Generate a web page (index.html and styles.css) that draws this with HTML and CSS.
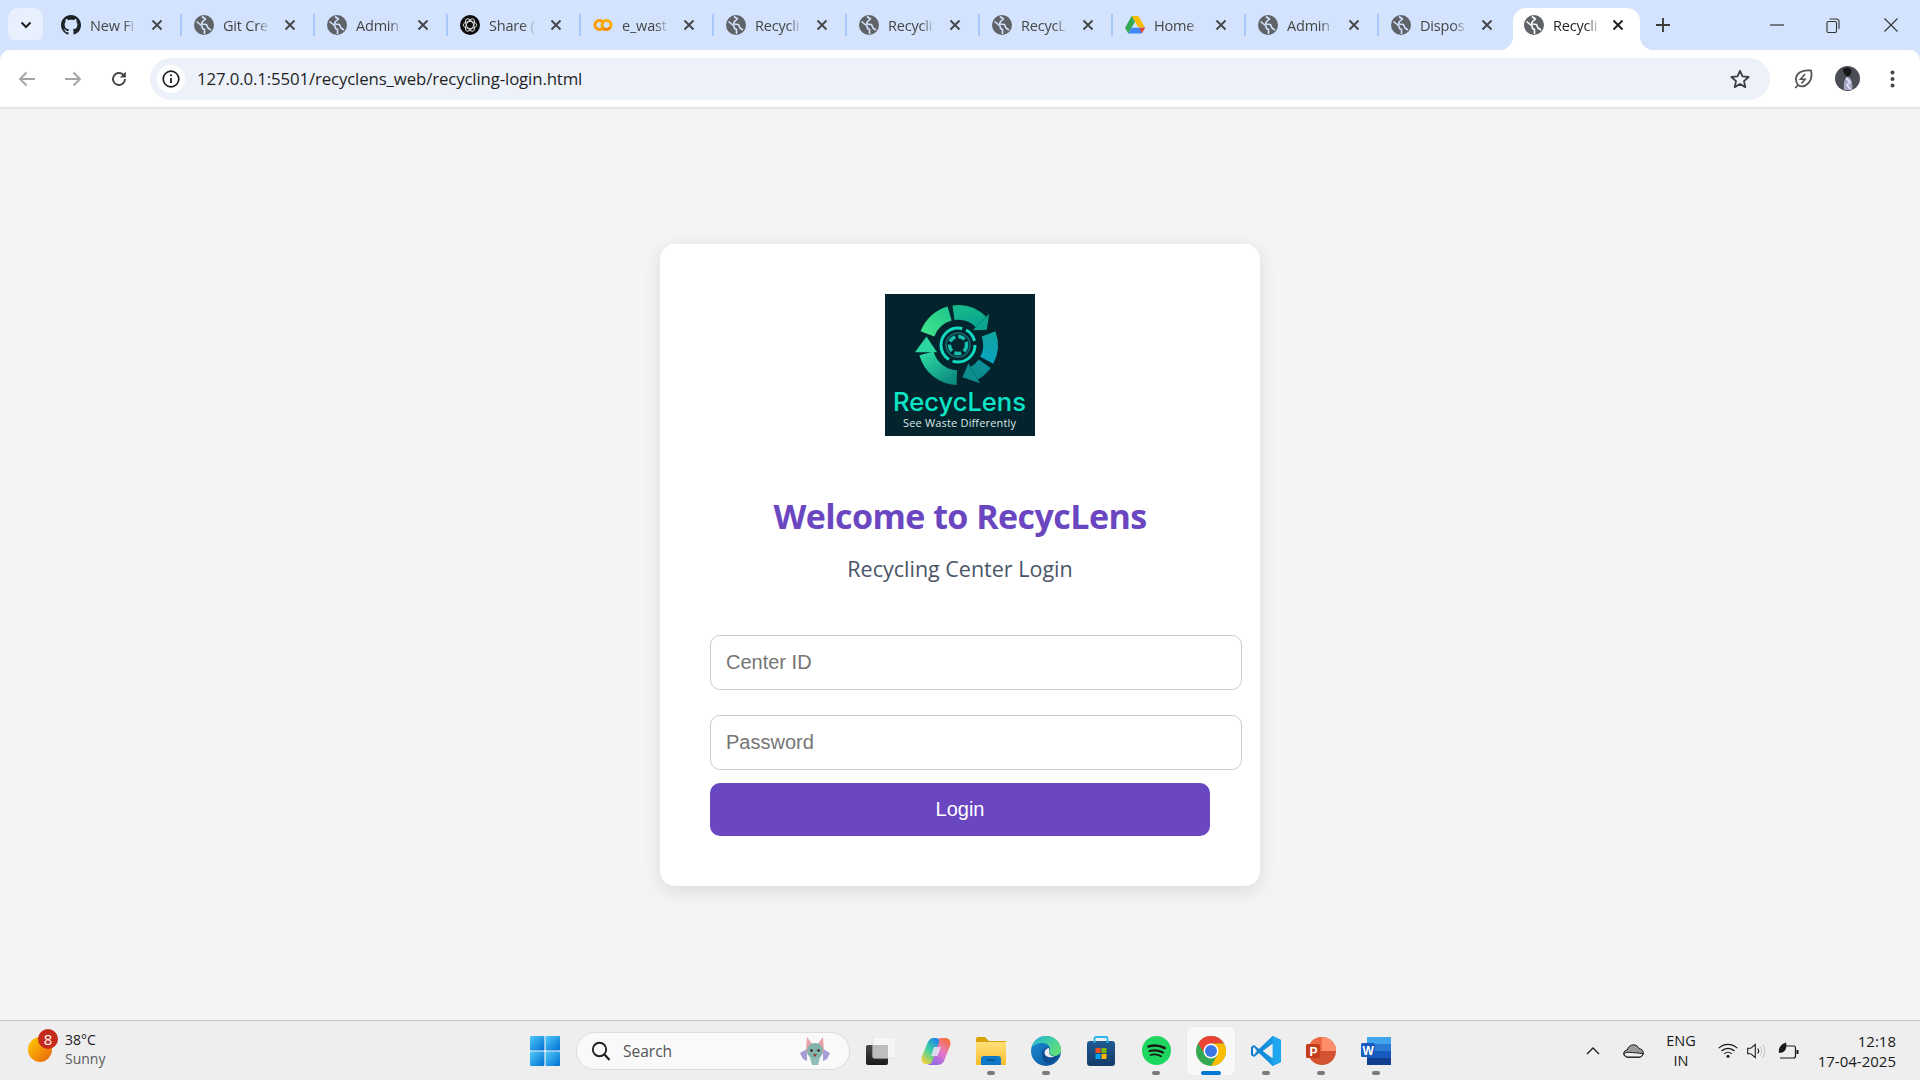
FILE: index.html
```html
<!DOCTYPE html>
<html lang="en">
<head>
<meta charset="utf-8">
<title>Recycling Center Login</title>
<link rel="stylesheet" href="styles.css">
</head>
<body>
<svg class="defs" width="0" height="0" aria-hidden="true">
  <defs>
    <symbol id="globe" viewBox="0 0 20 20"><circle cx="10" cy="10" r="10" fill="#5f6368"/><g fill="none" stroke="currentColor" stroke-width="1.6" stroke-linejoin="round"><path d="M2.500 6.500L8 11l.5 2.500 2 1V19"/><path d="M8 1.500l3.500 2.500L8.500 6.500 7.500 9l5 .5 1.500 3.500 3 2"/></g></symbol>
    <symbol id="close" viewBox="0 0 12 12"><path d="M1.500 1.500l9 9M10.500 1.500l-9 9" stroke="currentColor" stroke-width="1.9" fill="none"/></symbol>
    <linearGradient id="lg1" x1="0" y1="1" x2="1" y2="0"><stop offset="0" stop-color="#3fe28a"/><stop offset="1" stop-color="#22c98c"/></linearGradient>
    <linearGradient id="lg2" x1="0" y1="0" x2="1" y2="1"><stop offset="0" stop-color="#14b88a"/><stop offset="1" stop-color="#0ca58f"/></linearGradient>
    <linearGradient id="lg3" x1="0" y1="0" x2="0" y2="1"><stop offset="0" stop-color="#0fa3a0"/><stop offset="1" stop-color="#0aa4c0"/></linearGradient>
    <linearGradient id="lg4" x1="1" y1="0" x2="0" y2="1"><stop offset="0" stop-color="#0b8f97"/><stop offset="1" stop-color="#0c8c8c"/></linearGradient>
    <linearGradient id="lg5" x1="1" y1="1" x2="0" y2="0"><stop offset="0" stop-color="#0c8a80"/><stop offset="1" stop-color="#2bd6a0"/></linearGradient>
    <linearGradient id="sun" x1="0" y1="0" x2="1" y2="1"><stop offset="0" stop-color="#ffd000"/><stop offset="1" stop-color="#e85f10"/></linearGradient>
    <linearGradient id="win" x1="0" y1="0" x2="1" y2="1"><stop offset="0" stop-color="#4fc9fb"/><stop offset="1" stop-color="#0070d0"/></linearGradient>
    <linearGradient id="edgeB" x1="0" y1="0" x2="1" y2="1"><stop offset="0" stop-color="#1a8fd8"/><stop offset="1" stop-color="#0c4f96"/></linearGradient>
    <linearGradient id="edgeG" x1="0" y1="0" x2="1" y2="0.6"><stop offset="0" stop-color="#1fb6d6"/><stop offset="1" stop-color="#5fe07a"/></linearGradient>
    <linearGradient id="folder" x1="0" y1="0" x2="0" y2="1"><stop offset="0" stop-color="#ffe07a"/><stop offset="1" stop-color="#fbbd2a"/></linearGradient>
    <linearGradient id="cop1" x1="0.8" y1="0" x2="0.2" y2="1"><stop offset="0" stop-color="#1d84ec"/><stop offset="0.5" stop-color="#3ed0a0"/><stop offset="1" stop-color="#f5d23a"/></linearGradient>
    <linearGradient id="cop2" x1="0.8" y1="0" x2="0.2" y2="1"><stop offset="0" stop-color="#8a62ee"/><stop offset="0.55" stop-color="#e87ac8"/><stop offset="1" stop-color="#f6703a"/></linearGradient>
    <linearGradient id="vs" x1="0" y1="0" x2="1" y2="0"><stop offset="0" stop-color="#0a78c8"/><stop offset="1" stop-color="#1fa6ee"/></linearGradient>
    <linearGradient id="store" x1="0" y1="0" x2="0" y2="1"><stop offset="0" stop-color="#1f5a94"/><stop offset="1" stop-color="#143a68"/></linearGradient>
    <linearGradient id="tv" x1="0" y1="0" x2="0" y2="1"><stop offset="0" stop-color="#484848"/><stop offset="1" stop-color="#1a1a1a"/></linearGradient>
  </defs>
</svg>

<div class="browser">
  <header class="tabstrip">
    <button class="tab-menu" type="button"><svg width="12" height="8" viewBox="0 0 12 8"><path d="M1.500 1.500L6 6l4.500-4.500" fill="none" stroke="#1f1f1f" stroke-width="2"/></svg></button>
    <div class="tabs">
      <div class="tab"><svg class="fav" viewBox="0 0 16 16"><path fill="#1f2328" d="M8 0C3.58 0 0 3.58 0 8c0 3.54 2.29 6.53 5.47 7.59.4.07.55-.17.55-.38 0-.19-.01-.82-.01-1.49-2.01.37-2.53-.49-2.69-.94-.09-.23-.48-.94-.82-1.13-.28-.15-.68-.52-.01-.53.63-.01 1.08.58 1.23.82.72 1.21 1.87.87 2.33.66.07-.52.28-.87.51-1.07-1.78-.2-3.64-.89-3.64-3.95 0-.87.31-1.59.82-2.15-.08-.2-.36-1.02.08-2.12 0 0 .67-.21 2.2.82.64-.18 1.32-.27 2-.27s1.36.09 2 .27c1.53-1.04 2.2-.82 2.2-.82.44 1.1.16 1.92.08 2.12.51.56.82 1.27.82 2.15 0 3.07-1.87 3.75-3.65 3.95.29.25.54.73.54 1.48 0 1.07-.01 1.93-.01 2.2 0 .21.15.46.55.38A8.013 8.013 0 0016 8c0-4.42-3.58-8-8-8z"/></svg><span class="tab-title">New Fi</span><svg class="x"><use href="#close"/></svg><i class="sep"></i></div>
      <div class="tab"><svg class="fav"><use href="#globe"/></svg><span class="tab-title">Git Cre</span><svg class="x"><use href="#close"/></svg><i class="sep"></i></div>
      <div class="tab"><svg class="fav"><use href="#globe"/></svg><span class="tab-title">Admin</span><svg class="x"><use href="#close"/></svg><i class="sep"></i></div>
      <div class="tab"><svg class="fav" viewBox="0 0 20 20"><circle cx="10" cy="10" r="10" fill="#0b0b0b"/><g fill="none" stroke="#d8d8d8" stroke-width="1"><ellipse cx="10" cy="10" rx="6.800" ry="3.500"/><ellipse cx="10" cy="10" rx="6.800" ry="3.500" transform="rotate(60 10 10)"/><ellipse cx="10" cy="10" rx="6.800" ry="3.500" transform="rotate(120 10 10)"/></g></svg><span class="tab-title">Share (</span><svg class="x"><use href="#close"/></svg><i class="sep"></i></div>
      <div class="tab"><svg class="fav" viewBox="0 0 20 20"><g fill="none" stroke-width="3"><path d="M9.300 6.500a4.500 4.500 0 1 0 0 7" stroke="#fb9c00"/><circle cx="13.500" cy="10" r="4.500" stroke="#f9ab00"/><path d="M17 12.500a4.500 4.500 0 0 1-7 .5" stroke="#f08a00"/></g></svg><span class="tab-title">e_wast</span><svg class="x"><use href="#close"/></svg><i class="sep"></i></div>
      <div class="tab"><svg class="fav"><use href="#globe"/></svg><span class="tab-title">Recycli</span><svg class="x"><use href="#close"/></svg><i class="sep"></i></div>
      <div class="tab"><svg class="fav"><use href="#globe"/></svg><span class="tab-title">Recycli</span><svg class="x"><use href="#close"/></svg><i class="sep"></i></div>
      <div class="tab"><svg class="fav"><use href="#globe"/></svg><span class="tab-title">RecycL</span><svg class="x"><use href="#close"/></svg><i class="sep"></i></div>
      <div class="tab"><svg class="fav" viewBox="0 0 20 18"><path d="M6.700 0h6.600l6.700 11.600h-6.600z" fill="#fbbc04"/><path d="M6.700 0L0 11.700l3.300 5.800 6.700-11.700z" fill="#34a853"/><path d="M6.600 11.700h13.400l-3.300 5.800H3.300z" fill="#4285f4"/><path d="M16.700 17.500l3.300-5.800h-5.500z" fill="#ea4335"/></svg><span class="tab-title">Home</span><svg class="x"><use href="#close"/></svg><i class="sep"></i></div>
      <div class="tab"><svg class="fav"><use href="#globe"/></svg><span class="tab-title">Admin</span><svg class="x"><use href="#close"/></svg><i class="sep"></i></div>
      <div class="tab"><svg class="fav"><use href="#globe"/></svg><span class="tab-title">Dispos</span><svg class="x"><use href="#close"/></svg></div>
      <div class="tab tab-active"><svg class="fav"><use href="#globe"/></svg><span class="tab-title">Recycli</span><svg class="x"><use href="#close"/></svg></div>
    </div>
    <button class="new-tab" type="button"><svg width="14" height="14" viewBox="0 0 14 14"><path d="M7 0v14M0 7h14" stroke="#3c3c3c" stroke-width="1.900"/></svg></button>
    <div class="win-controls">
      <span class="win-btn"><svg width="14" height="2" viewBox="0 0 14 2"><path d="M0 1h14" stroke="#333" stroke-width="1.200"/></svg></span>
      <span class="win-btn"><svg width="14" height="15" viewBox="0 0 14 15"><rect x="1" y="3.500" width="9.500" height="11" rx="1.500" fill="none" stroke="#333" stroke-width="1.100"/><path d="M3.500 1h7a2.500 2.500 0 0 1 2.500 2.500V11" fill="none" stroke="#333" stroke-width="1.100"/></svg></span>
      <span class="win-btn win-close"><svg width="14" height="14" viewBox="0 0 14 14"><path d="M.5.5l13 13M13.500.5l-13 13" stroke="#333" stroke-width="1.100"/></svg></span>
    </div>
  </header>

  <nav class="toolbar">
    <span class="tool-btn"><svg width="18" height="16" viewBox="0 0 18 16"><path d="M17 8H2M8.500 1.500L2 8l6.500 6.500" fill="none" stroke="#a3a5a8" stroke-width="1.900"/></svg></span>
    <span class="tool-btn"><svg width="18" height="16" viewBox="0 0 18 16"><path d="M1 8h15M9.500 1.500L16 8l-6.500 6.500" fill="none" stroke="#a3a5a8" stroke-width="1.900"/></svg></span>
    <span class="tool-btn tool-btn-reload"><svg width="18" height="18" viewBox="0 0 18 18"><path d="M15 9a6 6 0 1 1-1.800-4.300L15 6.500" fill="none" stroke="#444746" stroke-width="1.900"/><path d="M15.800 1.500v6h-6z" fill="#444746"/></svg></span>
    <div class="omnibox">
      <span class="site-info"><svg width="18" height="18" viewBox="0 0 18 18"><circle cx="9" cy="9" r="7.800" fill="none" stroke="#1f1f1f" stroke-width="1.700"/><path d="M9 8v5" stroke="#1f1f1f" stroke-width="1.800"/><circle cx="9" cy="5.300" r="1.100" fill="#1f1f1f"/></svg></span>
      <span class="url">127.0.0.1:5501/recyclens_web/recycling-login.html</span>
      <span class="star"><svg width="20" height="20" viewBox="0 0 20 20"><path d="M10 1.800l2.500 5.600 6.100.6-4.600 4.100 1.300 6L10 15l-5.300 3.100 1.300-6L1.400 8l6.100-.6z" fill="none" stroke="#3c3f42" stroke-width="1.800" stroke-linejoin="round"/></svg></span>
    </div>
    <div class="tool-right">
      <span class="tool-btn"><svg width="20" height="22" viewBox="0 0 20 22"><path d="M5 17C1.500 12.500 2.500 7 7 4.300 10 2.500 14 2 18 2.500c1 4.500.5 9.500-3 13C12 18.500 8 19 5 17zM5 17l-2.800 3" fill="none" stroke="#555" stroke-width="1.800" stroke-linejoin="round"/><path d="M12 6l-4.500 5.300h4.500L8.500 15.500" fill="none" stroke="#555" stroke-width="1.600"/></svg></span>
      <span class="tool-btn"><svg width="25" height="25" viewBox="0 0 25 25"><circle cx="12.500" cy="12.500" r="12.500" fill="#4c4e55"/><path d="M8 3c3-2.500 7-2 8.500 1 .5 2-.5 5-3 6-3 .5-5.500-3-5.500-7z" fill="#17181c"/><path d="M9 24c-.5-6 0-11 3-13 3 0 5.500 2 5.500 13z" fill="#a5a8c6"/><path d="M11 12l4 4-3 3 3 4" stroke="#e6e8f8" stroke-width="1.500" fill="none"/></svg></span>
      <span class="tool-btn"><svg width="5" height="18" viewBox="0 0 5 18"><circle cx="2.500" cy="2.500" r="2" fill="#444746"/><circle cx="2.500" cy="9" r="2" fill="#444746"/><circle cx="2.500" cy="15.500" r="2" fill="#444746"/></svg></span>
    </div>
  </nav>

  <main class="page">
    <section class="card">
      <div class="logo-wrap">
        <svg class="logo" width="150" height="142" viewBox="0 0 150 142" role="img" aria-label="RecycLens logo">
          <rect width="150" height="142" fill="#03242c"/>
          <g transform="translate(73 51) scale(1.05) translate(-73 -51)">
            <g fill="none" stroke-width="14">
              <path d="M43.900 40.400A32 32 0 0 1 65 21" stroke="url(#lg1)"/>
              <path d="M68.700 20.300A31 31 0 0 1 94.900 29.100" stroke="url(#lg2)"/>
              <path d="M102.100 40.400A31 31 0 0 1 100.400 65.500" stroke="url(#lg3)"/>
              <path d="M98.400 68.800A31 31 0 0 1 88.500 77.800" stroke="url(#lg4)"/>
              <path d="M71.900 82A31 31 0 0 1 43 59" stroke="url(#lg5)"/>
            </g>
            <polygon points="87.100,36.900 102.700,21.300 100.400,36.500" fill="#0ca58f"/>
            <polygon points="83,68.300 94,87.400 77.300,81.700" fill="#0c8c8c"/>
            <polygon points="43,43 32,58 53,58" fill="#2bd6a0"/>
          </g>
          <circle cx="73" cy="51" r="17" fill="none" stroke="#14d8c0" stroke-width="3" stroke-dasharray="32 4 48 4 14 4"/>
          <circle cx="73" cy="51" r="12" fill="#03242c" stroke="#0f5f66" stroke-width="2"/>
          <circle cx="73" cy="51" r="8.500" fill="none" stroke="#17bfae" stroke-width="3.500" stroke-dasharray="7 3"/>
          <text class="logo-name" x="8" y="116.500" textLength="133" lengthAdjust="spacingAndGlyphs">RecycLens</text>
          <text class="logo-tag" x="18" y="133" textLength="113" lengthAdjust="spacing">See Waste Differently</text>
        </svg>
      </div>
      <h1 class="title">Welcome to RecycLens</h1>
      <p class="subtitle">Recycling Center Login</p>
      <form class="login-form">
        <input class="field" type="text" placeholder="Center ID">
        <input class="field" type="password" placeholder="Password">
        <button class="login-btn" type="button">Login</button>
      </form>
    </section>
  </main>

  <footer class="taskbar">
    <div class="tb-left">
      <span class="weather-icon">
        <svg width="24" height="25" viewBox="0 0 24 25"><ellipse cx="12" cy="12.500" rx="12" ry="12.500" fill="url(#sun)"/></svg>
        <b class="weather-badge">8</b>
      </span>
      <span class="weather-text"><span class="temp">38°C</span><span class="cond">Sunny</span></span>
    </div>
    <div class="tb-center">
      <span class="start"><svg width="30" height="30" viewBox="0 0 30 30"><g fill="url(#win)"><rect width="14.400" height="14.400" rx="1"/><rect x="15.600" width="14.400" height="14.400" rx="1"/><rect y="15.600" width="14.400" height="14.400" rx="1"/><rect x="15.600" y="15.600" width="14.400" height="14.400" rx="1"/></g></svg></span>
      <div class="search">
        <svg width="20" height="20" viewBox="0 0 20 20"><circle cx="8.500" cy="8.500" r="6.700" fill="none" stroke="#222" stroke-width="1.900"/><path d="M13.500 13.500l5 5.500" stroke="#222" stroke-width="2.200"/></svg>
        <span class="search-text">Search</span>
        <svg class="bat" width="34" height="30" viewBox="0 0 34 30"><path d="M2 17l7-4v12l-4-2zM32 17l-7-4v12l4-2z" fill="#a79bd8"/><path d="M9 1l6 8h4l6-8 1 14-9 12-9-12z" fill="#e6a0a8"/><ellipse cx="17" cy="15" rx="8" ry="8" fill="#7fb3ac"/><path d="M12 22h10l-2 7h-6z" fill="#8fbdb6"/><circle cx="13.500" cy="14.500" r="1.300" fill="#3a1a1a"/><circle cx="20.500" cy="14.500" r="1.300" fill="#3a1a1a"/><path d="M15 18h4l-2 3z" fill="#9a3030"/></svg>
      </div>
      <span class="app"><span class="tile"><svg width="30" height="28" viewBox="0 0 30 28"><rect y="8" width="22" height="20" rx="2" fill="url(#tv)"/><rect x="7" width="23" height="21" rx="1" fill="#f8f8f8" fill-opacity=".75" stroke="#e4e4e4"/><rect x="7" y="8" width="15" height="13" fill="#bdbdbd"/></svg></span></span>
      <span class="app"><span class="tile"><svg width="30" height="28" viewBox="0 0 30 28"><path d="M14 0h7c2 0 2.500 1.500 2 3l-7 19c-1 3-3.500 5-6.500 5H5.500C1.500 27 -.5 23 1 19L7 4c1-2.500 4-4 7-4z" fill="url(#cop2)" transform="rotate(180 15 14)"/><path d="M13 1c-3 0-5 1.500-6 4L1 19c-1.500 4 .5 8 4.500 8H8c2 0 3-1 3.500-3L18 5c.5-2-1-4-2.500-4z" fill="url(#cop1)"/><path d="M13 10h7l-3.500 9h-6.500z" fill="#e9e4f6" fill-opacity=".85"/></svg></span></span>
      <span class="app has-dot"><span class="tile"><svg width="30" height="28" viewBox="0 0 30 28"><path d="M0 2a2 2 0 0 1 2-2h7l4 4h17v4H0z" fill="#dba30a"/><path d="M0 5h30v23H0z" fill="url(#folder)"/><path d="M5 22a3 3 0 0 1 3-3h14a3 3 0 0 1 3 3v6H5z" fill="#0f78c8"/><path d="M11 23h8" stroke="#0b4f88" stroke-width="1.500"/></svg></span></span>
      <span class="app has-dot"><span class="tile"><svg width="30" height="30" viewBox="0 0 30 30"><circle cx="15" cy="15" r="15" fill="url(#edgeB)"/><path d="M1 11C3 4 9 0 15 0c8 0 15 6 15 14 0 4-3 6-7 6-3 0-5-1-5-3 0-1 1-2 1-4 0-3-3-6-8-6S3 10 1 11z" fill="url(#edgeG)"/><path d="M11 19c0-5 3-8 7-7.500 .5 1.500.5 3.500 0 5 .5 2 3 3.500 6 3.500 1.500 0 3-.5 4-1.500-2 5-7 9-12 9-3-1.500-5-5-5-8.500z" fill="#0f4c93"/><path d="M13.500 17c0-3 2-4.500 4.500-5 .5 1.500.5 3.500 0 5 .5 2 3 3.500 6 3.500-4 1.500-10 1-10.500-3.500z" fill="#eeeeee"/></svg></span></span>
      <span class="app"><span class="tile"><svg width="28" height="30" viewBox="0 0 28 30"><rect y="5" width="28" height="25" rx="3" fill="url(#store)"/><path d="M7.500 7V2.500a1.500 1.500 0 0 1 1.500-1.500h10a1.500 1.500 0 0 1 1.500 1.500V7" fill="none" stroke="#29b6ea" stroke-width="1.800"/><rect x="8.500" y="12" width="5" height="5" fill="#f25022"/><rect x="14.500" y="12" width="5" height="5" fill="#7fba00"/><rect x="8.500" y="18" width="5" height="5" fill="#00a4ef"/><rect x="14.500" y="18" width="5" height="5" fill="#ffb900"/></svg></span></span>
      <span class="app has-dot"><span class="tile"><svg width="29" height="29" viewBox="0 0 29 29"><circle cx="14.500" cy="14.500" r="14.500" fill="#1ed760"/><g fill="none" stroke="#1a1a1a" stroke-linecap="round"><path d="M6.500 10.500c5-1.500 11.500-1 16 1.500" stroke-width="2.600"/><path d="M7.500 15c4.500-1.200 9.500-.7 13.500 1.500" stroke-width="2.200"/><path d="M8.500 19c3.500-1 7.500-.6 10.500 1.200" stroke-width="1.800"/></g></svg></span></span>
      <span class="app"><span class="tile tile-active"><svg width="30" height="30" viewBox="0 0 30 30"><circle cx="15" cy="15" r="15" fill="#34a853"/><path d="M2 7.500A15 15 0 0 1 28 7.500L15 7.500 9 18z" fill="#ea4335"/><path d="M28 7.500A15 15 0 0 1 15 30L21 19.500 15 7.500z" fill="#fbbc04"/><circle cx="15" cy="15" r="7.500" fill="#fff"/><circle cx="15" cy="15" r="6" fill="#3b78e7"/></svg></span></span>
      <span class="app has-dot"><span class="tile"><svg width="30" height="30" viewBox="0 0 30 30"><path d="M21.500 0L30 4v22l-8.500 4L8 17l-5 4-3-2v-8l3-2 5 4z" fill="url(#vs)"/><path d="M21.500 8L12 15l9.500 7z" fill="#eeeeee"/><path d="M21.500 0L30 4v22l-8.500 4z" fill="#1fa6ee"/><path d="M21.500 8L12 15l9.500 7z" fill="#eeeeee"/><path d="M3 11l-1 1v6l1 1 3-4z" fill="#eeeeee"/></svg></span></span>
      <span class="app has-dot"><span class="tile"><svg width="30" height="30" viewBox="0 0 30 30"><circle cx="16" cy="15" r="14" fill="#d35230"/><path d="M16 1a14 14 0 0 1 14 14H16z" fill="#ff8f6b"/><path d="M16 1a14 14 0 0 0-14 14h14z" fill="#ed6c47"/><rect x="0" y="8" width="14" height="14" rx="1.500" fill="#c43e1c"/><text class="tile-letter" x="3.500" y="19.500">P</text></svg></span></span>
      <span class="app has-dot"><span class="tile"><svg width="30" height="30" viewBox="0 0 30 30"><rect x="6" y="1" width="24" height="7" fill="#41a5ee"/><rect x="6" y="8" width="24" height="7" fill="#2b7cd3"/><rect x="6" y="15" width="24" height="7" fill="#185abd"/><rect x="6" y="22" width="24" height="7" fill="#103f91"/><rect x="0" y="7" width="14" height="14" rx="1.500" fill="#1a5bbf"/><text class="tile-letter" x="1.600" y="18.500">W</text></svg></span></span>
    </div>
    <div class="tray">
      <span class="tray-item tray-chev"><svg width="14" height="8" viewBox="0 0 14 8"><path d="M1 7l6-6 6 6" fill="none" stroke="#1a1a1a" stroke-width="1.300"/></svg></span>
      <span class="tray-item tray-cloud"><svg width="21" height="14" viewBox="0 0 21 14"><path d="M5 13.300C2.500 13.300.7 11.700.7 9.600c0-2 1.600-3.500 3.500-3.600C5 3 7.500.8 10.500.8c2.600 0 4.700 1.600 5.500 3.800 2.600.2 4.300 2 4.300 4.400 0 2.500-1.900 4.300-4.300 4.300z" fill="#9a9a9a" stroke="#1a1a1a" stroke-width="1"/><path d="M1 9.500c3-2 7-1 19 0 0 2-2 3.500-4 3.500H5c-2 0-4-1.500-4-3.500z" fill="#eeeeee" stroke="#1a1a1a" stroke-width="1"/></svg></span>
      <span class="tray-item tray-lang"><span>ENG</span><span>IN</span></span>
      <span class="tray-item tray-wifi"><svg width="20" height="15" viewBox="0 0 20 15"><g fill="none" stroke="#1a1a1a" stroke-width="1.200"><path d="M.8 5.200a13 13 0 0 1 18.400 0"/><path d="M3.500 8a9.200 9.200 0 0 1 13 0"/><path d="M6.300 10.800a5.200 5.200 0 0 1 7.400 0"/></g><circle cx="10" cy="13.200" r="1.500" fill="#1a1a1a"/></svg></span>
      <span class="tray-item tray-vol"><svg width="20" height="16" viewBox="0 0 20 16"><path d="M.7 5.300h3L8.300 1.500v13L3.700 10.700h-3z" fill="none" stroke="#1a1a1a" stroke-width="1.100"/><path d="M10.700 5.500a4 4 0 0 1 0 5" fill="none" stroke="#1a1a1a" stroke-width="1.100"/><path d="M13 3.500a7 7 0 0 1 0 9M15.500 1.500a10 10 0 0 1 0 13" fill="none" stroke="#c4c4c4" stroke-width="1.100"/></svg></span>
      <span class="tray-item tray-bat"><svg width="21" height="18" viewBox="0 0 21 18"><path d="M5 4h10.500a2 2 0 0 1 2 2v8a2 2 0 0 1-2 2H2" fill="none" stroke="#1a1a1a" stroke-width="1.200"/><rect x="18.500" y="8" width="2" height="4" fill="#1a1a1a"/><path d="M1 11C0 6 3 2 8 .5c1 4 0 9-4 10-1 .3-2 .5-3 .5z" fill="#1a1a1a"/></svg></span>
      <span class="clock"><span>12:18</span><span>17-04-2025</span></span>
    </div>
  </footer>
</div>
</body>
</html>
```

FILE: styles.css
```css
* { box-sizing: border-box; }
html, body { margin: 0; height: 100%; overflow: hidden; }
body { font-family: "Open Sans", "Noto Sans", sans-serif; color: #1f1f1f; }
.defs { position: absolute; }
button { border: 0; padding: 0; font: inherit; }

.browser { display: flex; flex-direction: column; height: 100vh; background: #f3f4f6; }

/* tab strip */
.tabstrip { display: flex; align-items: flex-end; height: 50px; flex: none; background: #d3e3fd; }
.tab-menu { display: flex; align-items: center; justify-content: center; width: 35px; height: 34px; margin: 0 5px 8px 8px; background: #e9f0fd; border-radius: 10px; }
.tabs { display: flex; align-items: stretch; height: 42px; }
.tab { display: flex; align-items: center; width: 133px; padding: 0 0 8px 13px; position: relative; color: #444746; }
.fav { width: 20px; height: 20px; flex: none; color: #d3e3fd; }
.tab-title { width: 47px; margin-left: 9px; font-size: 14.5px; letter-spacing: -.2px; white-space: nowrap; overflow: hidden; -webkit-mask-image: linear-gradient(to right, #000 72%, transparent 100%); mask-image: linear-gradient(to right, #000 72%, transparent 100%); }
.x { width: 12px; height: 12px; margin-left: 14px; color: #444746; flex: none; }
.sep { position: absolute; left: 132px; top: 6px; width: 2px; height: 22px; background: #a8c7fa; }
.tab-active { background: #fff; border-radius: 13px 13px 0 0; color: #1f1f1f; width: 127px; padding: 0 0 8px 11px; margin-left: 2px; }
.tab-active .fav { color: #fff; }
.tab-active .x { color: #1f1f1f; margin-left: 12px; }
.tab-active::before, .tab-active::after { content: ""; position: absolute; bottom: 0; width: 14px; height: 14px; }
.tab-active::before { left: -14px; background: radial-gradient(circle at 0 0, transparent 14px, #fff 14.5px); }
.tab-active::after { right: -14px; background: radial-gradient(circle at 100% 0, transparent 14px, #fff 14.5px); }
.new-tab { display: flex; align-items: center; justify-content: center; align-self: flex-start; width: 30px; height: 30px; margin: 10px 0 0 8px; background: transparent; }
.win-controls { display: flex; margin-left: auto; align-self: flex-start; height: 50px; }
.win-btn { display: flex; align-items: center; justify-content: center; width: 56px; height: 50px; }
.win-close { width: 59px; }

/* toolbar */
.toolbar { display: flex; align-items: center; height: 59px; flex: none; padding: 0 5px 0 4px; background: #fff; border-bottom: 2px solid #e4e5e7; border-radius: 10px 10px 0 0; box-shadow: 0 -10px 0 #d3e3fd; }
.tool-btn { display: flex; align-items: center; justify-content: center; width: 46px; height: 40px; flex: none; }
.tool-btn-reload { width: 45px; margin-right: 9px; }
.omnibox { display: flex; align-items: center; width: 1620px; height: 42px; flex: none; padding: 0 10px 0 7px; background: #edf2fa; border-radius: 21px; }
.site-info { display: flex; align-items: center; justify-content: center; width: 28px; height: 28px; flex: none; background: #fff; border-radius: 50%; }
.url { margin-left: 12px; font-size: 16.8px; color: #1f1f1f; letter-spacing: -.12px; white-space: nowrap; }
.star { display: flex; margin-left: auto; margin-right: 10px; }
.tool-right { display: flex; margin-left: 10px; }
.tool-right .tool-btn { width: 45px; }

/* login card */
.page { flex: 1; display: flex; align-items: center; justify-content: center; min-height: 0; }
.card { width: 600px; padding: 50px; background: #fff; border-radius: 15px; box-shadow: 0 5px 19px rgba(0, 0, 0, .1); }
.logo-wrap { display: flex; justify-content: center; }
.logo { display: block; }
.logo-name { font-family: Inter, sans-serif; font-size: 25px; font-weight: 500; fill: #0ce4c8; }
.logo-tag { font-family: "Open Sans", sans-serif; font-size: 11px; font-weight: 500; fill: #dce8e8; }
.title { margin: 56px 0 0; font-size: 34px; line-height: 48px; font-weight: 700; text-align: center; color: #6b46c1; letter-spacing: -.55px; }
.subtitle { margin: 14.5px 0 0; font-size: 21.5px; line-height: 30px; text-align: center; color: #4a5568; }
.login-form { display: flex; flex-direction: column; align-items: flex-start; margin-top: 50.5px; }
.field { display: block; width: 532px; height: 55px; padding: 0 15px; border: 1px solid #ccc; border-radius: 10px; background: #fff; font-family: "Liberation Sans", Arial, sans-serif; font-size: 20px; outline: 0; }
.field::placeholder { color: #757575; opacity: 1; }
.field + .field { margin-top: 25px; }
.login-btn { width: 100%; height: 53px; margin-top: 13px; background: #6b46c1; color: #fff; border-radius: 10px; font-family: "Liberation Sans", Arial, sans-serif; font-size: 20px; }

/* taskbar */
.taskbar { display: flex; align-items: center; height: 60px; flex: none; background: #eeeeee; border-top: 1px solid #c6c6c6; }
.tb-left { display: flex; align-items: center; width: 530px; padding: 0 0 3px 28px; }
.weather-icon { display: block; position: relative; width: 24px; height: 25px; }
.weather-icon svg { display: block; }
.weather-badge { position: absolute; left: 10px; top: -8px; width: 20px; height: 20px; border-radius: 50%; background: #c42b1c; color: #fff; font-size: 15px; font-weight: 400; line-height: 20px; text-align: center; }
.weather-text { display: flex; flex-direction: column; margin-left: 13px; font-size: 14px; line-height: 19.5px; }
.temp { color: #1a1a1a; }
.cond { color: #5d5d5d; }
.tb-center { display: flex; align-items: center; }
.start { display: flex; width: 30px; margin-right: 16px; }
.search { display: flex; align-items: center; width: 274px; height: 38px; margin-right: 3.5px; padding: 0 17.5px 0 14px; background: #f9f9f9; border: 1px solid #dcdcdc; border-radius: 19px; }
.search-text { margin-left: 12px; font-size: 15.5px; color: #555; }
.bat { margin-left: auto; }
.app { display: flex; justify-content: center; width: 55px; }
.tile { position: relative; display: flex; align-items: center; justify-content: center; width: 48px; height: 48px; border-radius: 5px; }
.tile-active { background: #f8f8f8; box-shadow: 0 0 1px rgba(0, 0, 0, .15); }
.tile-active::after { content: ""; position: absolute; left: 14px; bottom: 0; width: 20px; height: 4px; border-radius: 2px; background: #0078d4; }
.has-dot .tile::after { content: ""; position: absolute; left: 20px; bottom: 0; width: 8px; height: 4px; border-radius: 2px; background: #7a7a7a; }
.tile-letter { font-family: "Liberation Sans", sans-serif; font-size: 12px; font-weight: 700; fill: #fff; }
.tray { display: flex; align-items: center; margin-left: auto; padding-right: 24px; }
.tray-item { display: flex; align-items: center; justify-content: center; flex: none; }
.tray-chev, .tray-cloud { width: 40px; }
.tray-lang { flex-direction: column; width: 56px; font-size: 14.5px; line-height: 20px; color: #1a1a1a; }
.tray-wifi { width: 38px; }
.tray-vol { width: 20px; }
.tray-bat { width: 42px; }
.clock { display: flex; flex-direction: column; align-items: flex-end; width: 87px; font-size: 15px; line-height: 20px; color: #1a1a1a; white-space: nowrap; }
```
